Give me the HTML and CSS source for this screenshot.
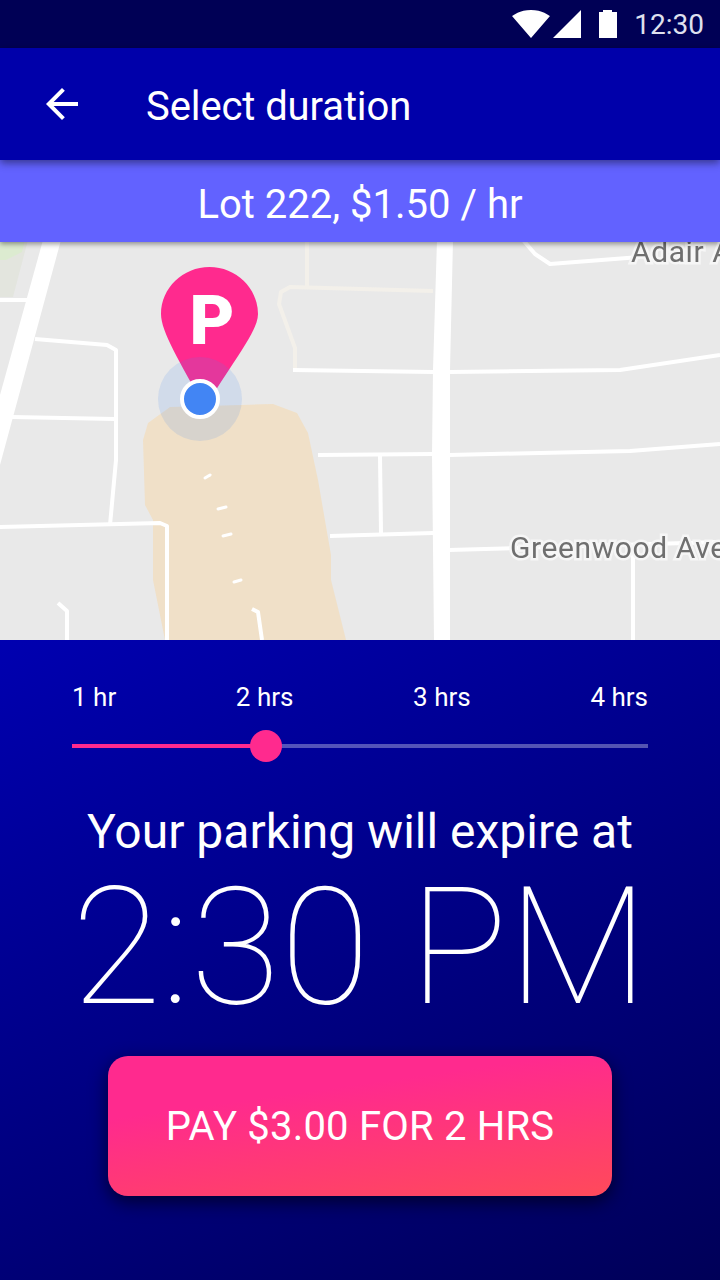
FILE: index.html
```html
<!DOCTYPE html>
<html lang="en">
<head>
    <meta charset="UTF-8">
    <title>Select duration</title>
    <link rel="stylesheet" href="styles.css">
</head>
<body>

<div class="status-bar">
    <svg class="icon-wifi" viewBox="0.36 3 23.28 18.5" preserveAspectRatio="none"><path d="M12.01 21.49L23.64 7c-.45-.34-4.93-4-11.64-4C5.28 3 .81 6.66.36 7l11.63 14.49.01.01.01-.01z"/></svg>
    <svg class="icon-signal" viewBox="0 0 28 28"><path d="M0 28L28 0v28z"/></svg>
    <svg class="icon-battery" viewBox="0 0 18 28"><path d="M4 2V0h9v2h5v26H0V2z"/></svg>
    <span class="clock">12:30</span>
</div>

<header class="app-bar">
    <svg class="icon-back" viewBox="0 0 24 24"><path d="M20 11H7.83l5.59-5.59L12 4l-8 8 8 8 1.41-1.41L7.83 13H20v-2z"/></svg>
    <h1 class="title">Select duration</h1>
</header>

<div class="lot-bar">Lot 222, $1.50 / hr</div>

<div class="map">
    <svg class="map-svg" viewBox="0 0 720 400">
        <polygon class="park" points="0,0 28,0 13,57 0,57"/>
        <polygon class="green" points="0,0 25,0 22,12 6,20 0,20"/>
        <polygon class="sand" points="148,183 170,167 273,164 297,173 308,193 318,240 331,315 331,340 346,400 165,400 153,340 153,280 145,265 143,200"/>

        <g class="road-faint">
            <polyline points="307,0 307,47"/>
            <polyline points="433,51 290,47 281,52 279,64 295,108 295,130"/>
        </g>
        <g class="road">
            <polyline points="0,60 27,60"/>
            <polyline points="35,99 107,105 116,110 116,220 110,285"/>
            <polyline points="12,177 115,179"/>
            <polyline points="0,287 160,283 167,286 167,400"/>
            <polyline points="58,363 67,371 67,400"/>
            <polyline points="252,369 258,372 262,400"/>
            <polyline points="293,130 433,132"/>
            <polyline points="450,132 620,130 720,115"/>
            <polyline points="318,215 433,214"/>
            <polyline points="449,215 630,211 720,204"/>
            <polyline points="380,216 381,293"/>
            <polyline points="330,296 433,293"/>
            <polyline points="449,310 720,302"/>
            <polyline points="633,310 633,400"/>
            <polyline points="523,0 535,14 550,24 640,17"/>
        </g>
        <g class="road-dash">
            <polyline points="205,238 210,235"/>
            <polyline points="218,269 226,267"/>
            <polyline points="223,296 231,294"/>
            <polyline points="234,342 241,340"/>
        </g>
        <polygon class="road-main" points="61,0 43,0 0,155 0,225"/>
        <polygon class="road-main" points="437,0 453,0 450,130 450,400 434,400 432,215 433,130"/>

        <text class="map-label" x="631" y="22">Adair Ave</text>
        <text class="map-label" x="510" y="318">Greenwood Ave</text>

        <path class="pin" d="M209.500 27C183 27 161 48 161 74C161 92 180 122 205 168C232 122 258 92 258 74C258 48 236 27 209.500 27Z"/>
        <text class="pin-letter" x="212" y="104" text-anchor="middle">P</text>
        <circle class="loc-halo" cx="200" cy="159" r="42"/>
        <circle class="loc-dot" cx="200" cy="159" r="18"/>
    </svg>
</div>

<main class="panel">
    <div class="ticks">
        <span>1 hr</span>
        <span>2 hrs</span>
        <span>3 hrs</span>
        <span>4 hrs</span>
    </div>
    <div class="slider">
        <div class="slider-fill"></div>
        <div class="slider-thumb"></div>
    </div>
    <p class="expire-label">Your parking will expire at</p>
    <p class="expire-time">2:30 PM</p>
    <button class="pay-btn">PAY $3.00 FOR 2 HRS</button>
</main>

</body>
</html>
```

FILE: styles.css
```css
html, body { margin: 0; padding: 0; }
body { width: 720px; height: 1280px; overflow: hidden; font-family: Roboto, sans-serif; color: #fff; display: flex; flex-direction: column; }

.status-bar { height: 48px; flex: none; background-color: #000055; display: flex; align-items: center; justify-content: flex-end; padding-right: 16px; box-sizing: border-box; }
.status-bar svg { fill: #fff; display: block; }
.icon-wifi { width: 38px; height: 28px; }
.icon-signal { width: 28px; height: 28px; margin-left: 3px; }
.icon-battery { width: 18px; height: 28px; margin-left: 18px; }
.clock { font-size: 28px; color: #dfe0ee; margin-left: 17px; }

.app-bar { height: 112px; flex: none; background-color: #0000aa; display: flex; align-items: center; padding-left: 38px; box-sizing: border-box; position: relative; z-index: 3; box-shadow: 0 3px 8px rgba(0, 0, 0, .45); }
.icon-back { width: 48px; height: 48px; fill: #fff; }
.title { font-size: 40px; font-weight: 400; letter-spacing: -.1px; margin: 0 0 0 60px; padding-top: 4px; }

.lot-bar { height: 82px; flex: none; background-color: #6262ff; font-size: 40px; display: flex; align-items: center; justify-content: center; padding-top: 6px; box-sizing: border-box; position: relative; z-index: 2; box-shadow: 0 2px 5px rgba(0, 0, 0, .4); }

.map { height: 398px; flex: none; background-color: #e9e9e9; overflow: hidden; display: flex; align-items: flex-end; }
.map-svg { width: 720px; height: 400px; flex: none; display: block; filter: blur(.5px); }
.park { fill: #e3e5de; }
.green { fill: #dcebd0; }
.sand { fill: #f0e0c8; }
.road, .road-faint, .road-dash { fill: none; stroke-linejoin: round; }
.road { stroke: #fff; stroke-width: 4; }
.road-faint { stroke: #f3f0ea; stroke-width: 4; }
.road-dash { stroke: #fff; stroke-width: 3; stroke-linecap: round; }
.road-main { fill: #fff; }
.map-label { font-family: Roboto, sans-serif; font-size: 30px; letter-spacing: .6px; fill: #6f6f6f; stroke: #f6f6f6; stroke-width: 5px; paint-order: stroke; }
.pin { fill: #ff2a8e; }
.pin-letter { font-family: Roboto, sans-serif; font-weight: 900; font-size: 69px; fill: #fff; }
.loc-halo { fill: rgba(66, 133, 244, .14); }
.loc-dot { fill: #4285f4; stroke: #fff; stroke-width: 4; }

.panel { flex: 1; background: linear-gradient(155deg, #0000b0 0%, #000058 100%); display: flex; flex-direction: column; align-items: center; padding-top: 42px; }
.ticks { width: 576px; display: flex; justify-content: space-between; font-size: 26px; line-height: 30px; }
.slider { width: 576px; height: 4px; margin-top: 32px; background-color: rgba(255, 255, 255, .33); position: relative; }
.slider-fill { width: 194px; height: 4px; background-color: #ff2a8e; }
.slider-thumb { position: absolute; left: 178px; top: -14px; width: 32px; height: 32px; border-radius: 50%; background-color: #ff2a8e; }
.expire-label { font-size: 48px; line-height: 54px; margin: 57px 0 0; }
.expire-time { font-size: 164px; font-weight: 100; line-height: 177px; margin: 0; }
.pay-btn { width: 504px; height: 140px; margin-top: 20px; border: none; border-radius: 20px; background: linear-gradient(172deg, #ff2a8e 30%, #ff4a5a 100%); color: #fff; font-family: Roboto, sans-serif; font-size: 40px; letter-spacing: .2px; box-shadow: 0 6px 18px rgba(0, 0, 0, .6); padding: 0; }
```
